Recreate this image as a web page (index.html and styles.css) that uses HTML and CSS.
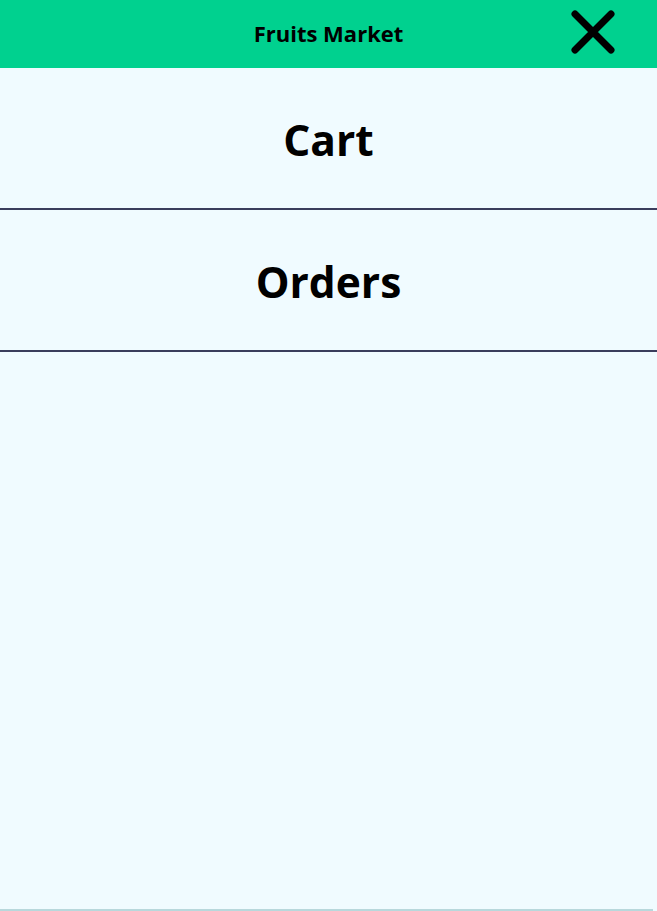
FILE: index.html
```html
<!DOCTYPE html>
<html>
<head>
<meta charset="utf-8">
<link rel="stylesheet" href="styles.css">
</head>
<body>
<div class="app">
  <header class="topbar">
    <h1 class="title">Fruits Market</h1>
    <button class="close" aria-label="Close">
      <svg width="48" height="48" viewBox="0 0 48 48">
        <path d="M6 6 L42 42 M42 6 L6 42" stroke="#000" stroke-width="7" stroke-linecap="round" fill="none"/>
      </svg>
    </button>
  </header>
  <nav class="menu">
    <a class="item">Cart</a>
    <a class="item">Orders</a>
  </nav>
  <div class="bottom"></div>
</div>
</body>
</html>
```
FILE: styles.css
```css
html, body {
  margin: 0;
  padding: 0;
  height: 100%;
}
body {
  background: #f0fbff;
  font-family: "Open Sans", "Noto Sans", sans-serif;
}
.app {
  height: 911px;
  display: flex;
  flex-direction: column;
}
.topbar {
  position: relative;
  height: 68px;
  background: #00d18f;
  display: flex;
  align-items: center;
  justify-content: center;
}
.title {
  margin: 0 0 2px;
  font-size: 22px;
  font-weight: 700;
  color: #000;
}
.close {
  position: absolute;
  right: 40px;
  top: 8px;
  width: 48px;
  height: 48px;
  padding: 0;
  border: 0;
  background: transparent;
}
.close svg { display: block; }
.menu {
  flex: 1;
  display: flex;
  flex-direction: column;
}
.item {
  height: 140px;
  display: flex;
  align-items: center;
  justify-content: center;
  padding-top: 2px;
  box-sizing: border-box;
  border-bottom: 2px solid #3a3d5c;
  font-size: 42.5px;
  font-weight: 700;
  color: #000;
}
.item { height: 142px; }
.bottom {
  height: 2px;
  margin-right: 4px;
  background: #b8d8dc;
}
```
